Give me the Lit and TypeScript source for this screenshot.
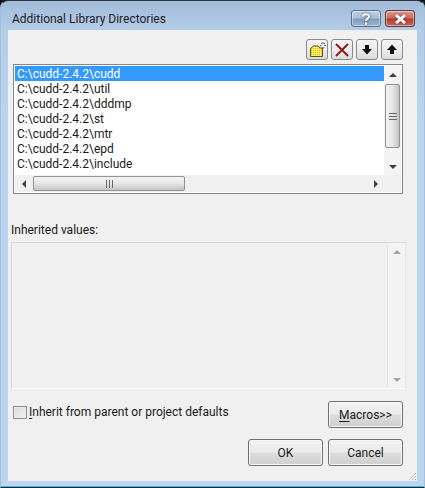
import { LitElement, html, css, svg } from "lit";
import { customElement } from "lit/decorators.js";

const DIRS = ["cudd", "util", "dddmp", "st", "mtr", "epd", "include"];

@customElement("app-root")
export class AppRoot extends LitElement {
  static styles = css`
    :host {
      display: block;
      width: 425px;
      height: 488px;
      background: #10181e;
      font-family: Roboto, "Noto Sans", sans-serif;
      font-size: 12px;
      color: #1a1a1a;
    }
    .window {
      position: relative;
      box-sizing: border-box;
      width: 425px;
      height: 488px;
      padding: 0 7px 6px;
      display: flex;
      flex-direction: column;
      background: linear-gradient(#a3bcd9 0, #b3cde7 30px, #b9d5ef 120px);
      border: 1px solid #a3bfd9;
      border-top-color: #2b3540;
      border-bottom-color: #0e2a38;
      border-radius: 8px 8px 0 0;
      box-shadow: inset 0 -1px 0 #4fb6dc;
    }
    .titlebar {
      height: 29px;
      flex: none;
      display: flex;
      align-items: flex-start;
      justify-content: space-between;
    }
    .title {
      margin: 10px 0 0 4px;
      font-size: 12px;
      line-height: 16px;
      color: #1c1c28;
    }
    .caption {
      display: flex;
      gap: 4px;
      margin: 9px 2px 0 0;
    }
    .cap {
      box-sizing: border-box;
      width: 30px;
      height: 17px;
      border: 1px solid #5f6f82;
      border-radius: 3px;
      display: flex;
      align-items: center;
      justify-content: center;
      background: linear-gradient(#bcd0e6 0, #a9c0da 48%, #7f9ab8 52%, #9db6d2 100%);
      box-shadow: inset 0 0 0 1px rgba(255, 255, 255, 0.45);
    }
    .cap.close {
      border-color: #6b3232;
      background: linear-gradient(#e09a90 0, #d0685c 48%, #b23a2e 52%, #c8685c 100%);
    }
    .cap svg {
      filter: drop-shadow(0 0 1px #3a3a4a);
    }
    .panel {
      flex: 1;
      display: flex;
      flex-direction: column;
      box-sizing: border-box;
      background: #f0f0f0;
      padding: 9px 14px 0 3px;
      position: relative;
    }
    .toolbar {
      display: flex;
      justify-content: flex-end;
      gap: 3px;
      height: 21px;
    }
    .tool {
      box-sizing: border-box;
      width: 22px;
      height: 21px;
      border: 1px solid #8a8a8a;
      border-radius: 3px;
      display: flex;
      align-items: center;
      justify-content: center;
      background: linear-gradient(#f6f6f6, #ececec 50%, #dcdcdc);
    }
    .list {
      margin: 4px 0 0 2px;
      box-sizing: border-box;
      height: 130px;
      border: 1px solid #828790;
      background: #fff;
      padding: 1px;
      display: grid;
      grid-template-columns: 1fr 17px;
      grid-template-rows: 109px 17px;
    }
    .rows {
      overflow: hidden;
    }
    .row {
      box-sizing: border-box;
      height: 15px;
      line-height: 13px;
      padding: 2px 0 0 2px;
      white-space: nowrap;
    }
    .row.sel {
      background: #3399ff;
      color: #fff;
    }
    .vbar {
      background: #f4f4f4;
      display: flex;
      flex-direction: column;
      align-items: center;
    }
    .arrow {
      flex: none;
      height: 17px;
      display: flex;
      align-items: center;
      justify-content: center;
    }
    .spacer {
      flex: 1;
    }
    .vthumb {
      box-sizing: border-box;
      width: 15px;
      height: 64px;
      margin-top: 1px;
      border: 1px solid #929292;
      border-radius: 2px;
      display: flex;
      align-items: center;
      justify-content: center;
      background: linear-gradient(90deg, #f4f4f4, #e6e6e6 50%, #c4c4c4);
    }
    .hbar {
      background: #f0f0f0;
      display: flex;
      align-items: center;
    }
    .hbar .arrow {
      width: 17px;
    }
    .hthumb {
      box-sizing: border-box;
      width: 152px;
      height: 15px;
      margin-left: 1px;
      border: 1px solid #929292;
      border-radius: 2px;
      display: flex;
      align-items: center;
      justify-content: center;
      background: linear-gradient(#f4f4f4, #e6e6e6 50%, #c4c4c4);
    }
    .corner {
      background: #f0f0f0;
    }
    .inh-label {
      margin-top: 28px;
      height: 16px;
      line-height: 16px;
    }
    .inh {
      margin-top: 4px;
      margin-right: -3px;
      box-sizing: border-box;
      height: 147px;
      border: 1px solid #d9d9d9;
      border-right-color: #e6e6e6;
      border-bottom-color: #fff;
      background: #f0f0f0;
      display: flex;
      justify-content: flex-end;
    }
    .inh-bar {
      width: 17px;
      display: flex;
      flex-direction: column;
      background: #f4f4f4;
      border-left: 1px solid #e8e8e8;
    }
    .check-row {
      display: flex;
      justify-content: space-between;
      align-items: flex-start;
      margin: 12px 0 0 2px;
    }
    .check {
      display: flex;
      align-items: center;
      gap: 2px;
      margin-top: 4px;
    }
    .box {
      box-sizing: border-box;
      width: 14px;
      height: 13px;
      border: 1px solid #8e8f8f;
      background: linear-gradient(135deg, #dcdcdc, #f0f0f0);
      box-shadow: inset 0 0 0 1px #e8e8e8;
    }
    .btn {
      box-sizing: border-box;
      width: 75px;
      height: 27px;
      border: 1px solid #707070;
      border-radius: 3px;
      display: flex;
      align-items: center;
      justify-content: center;
      background: linear-gradient(#f2f2f2, #ebebeb 48%, #dddddd 52%, #cfcfcf);
      box-shadow: inset 0 0 0 1px #f8f8f8;
    }
    .actions {
      display: flex;
      justify-content: flex-end;
      gap: 5px;
      margin-top: 11px;
    }
    u {
      text-underline-offset: 2px;
    }
    .grip {
      position: absolute;
      right: 0;
      bottom: 0;
    }
  `;

  tri(dir: "up" | "down" | "left" | "right", fill = "#404040") {
    const pts = {
      up: "4,0 8,4 0,4",
      down: "0,0 8,0 4,4",
      left: "4,0 4,8 0,4",
      right: "0,0 4,4 0,8",
    }[dir];
    const vert = dir === "up" || dir === "down";
    return html`<svg width=${vert ? 8 : 4} height=${vert ? 4 : 8}>
      ${svg`<polygon points=${pts} fill=${fill} />`}
    </svg>`;
  }

  render() {
    return html`
      <div class="window">
        <div class="titlebar">
          <div class="title">Additional Library Directories</div>
          <div class="caption">
            <div class="cap">
              <svg width="12" height="14" viewBox="0 0 12 14">
                <path d="M3 4.5 C3 1.5 9 1.5 9 4.5 C9 6.5 6 6.5 6 9" fill="none" stroke="#fff" stroke-width="2" />
                <rect x="5" y="10.5" width="2.2" height="2.2" fill="#fff" />
              </svg>
            </div>
            <div class="cap close">
              <svg width="13" height="10" viewBox="0 0 13 10">
                <path d="M2 1 L11 9 M11 1 L2 9" stroke="#fff" stroke-width="3" />
              </svg>
            </div>
          </div>
        </div>
        <div class="panel">
          <div class="toolbar">
            <div class="tool">
              <svg width="18" height="17" viewBox="0 0 18 17">
                <defs>
                  <pattern id="dither" width="2" height="2" patternUnits="userSpaceOnUse">
                    <rect width="2" height="2" fill="#f8e840" />
                    <rect width="1" height="1" fill="#fff7a0" />
                    <rect x="1" y="1" width="1" height="1" fill="#d8c020" />
                  </pattern>
                </defs>
                <path d="M2.5 7.5 L5.5 5 H10 L12 7 H14.5 V15.5 H2.5 Z" fill="url(#dither)" stroke="#5a5020" />
                <path d="M15 1 V3 M15 6 V8 M12 4.5 H13.5 M16 4.5 H18 M13 2 L14 3 M17 2 L16 3 M13.5 6.5 L14 6 M16.5 6.5 L16 6" stroke="#606060" />
              </svg>
            </div>
            <div class="tool">
              <svg width="16" height="16" viewBox="0 0 16 16">
                <path d="M2 2 L14 14 M14 2 L2 14" stroke="#8c1a1a" stroke-width="2" />
              </svg>
            </div>
            <div class="tool">
              <svg width="10" height="11" viewBox="0 0 10 11">
                <path d="M3 1 H7 V5 H10 L5 10.5 L0 5 H3 Z" fill="#111" />
              </svg>
            </div>
            <div class="tool">
              <svg width="10" height="11" viewBox="0 0 10 11">
                <path d="M3 10 H7 V6 H10 L5 0.5 L0 6 H3 Z" fill="#111" />
              </svg>
            </div>
          </div>
          <div class="list">
            <div class="rows">
              ${DIRS.map(
                (d, i) => html`<div class="row ${i === 0 ? "sel" : ""}">C:\\cudd-2.4.2\\${d}</div>`
              )}
            </div>
            <div class="vbar">
              <div class="arrow">${this.tri("up")}</div>
              <div class="vthumb">
                <svg width="8" height="7">
                  <path d="M0 .5 H8 M0 3.5 H8 M0 6.5 H8" stroke="#666" />
                </svg>
              </div>
              <div class="spacer"></div>
              <div class="arrow">${this.tri("down")}</div>
            </div>
            <div class="hbar">
              <div class="arrow">${this.tri("left")}</div>
              <div class="hthumb">
                <svg width="7" height="8">
                  <path d="M.5 0 V8 M3.5 0 V8 M6.5 0 V8" stroke="#666" />
                </svg>
              </div>
              <div class="spacer"></div>
              <div class="arrow">${this.tri("right")}</div>
            </div>
            <div class="corner"></div>
          </div>
          <div class="inh-label">Inherited values:</div>
          <div class="inh">
            <div class="inh-bar">
              <div class="arrow">${this.tri("up", "#a0a0a0")}</div>
              <div class="spacer"></div>
              <div class="arrow">${this.tri("down", "#a0a0a0")}</div>
            </div>
          </div>
          <div class="check-row">
            <label class="check">
              <span class="box"></span>
              <span><u>I</u>nherit from parent or project defaults</span>
            </label>
            <div class="btn"><span><u>M</u>acros&gt;&gt;</span></div>
          </div>
          <div class="actions">
            <div class="btn">OK</div>
            <div class="btn">Cancel</div>
          </div>
          <svg class="grip" width="10" height="10" viewBox="0 0 10 10">
            <path d="M9 2 L2 9 M9 5 L5 9 M9 8 L8 9" stroke="#9a9a9a" stroke-dasharray="1 1" />
          </svg>
        </div>
      </div>
    `;
  }
}
